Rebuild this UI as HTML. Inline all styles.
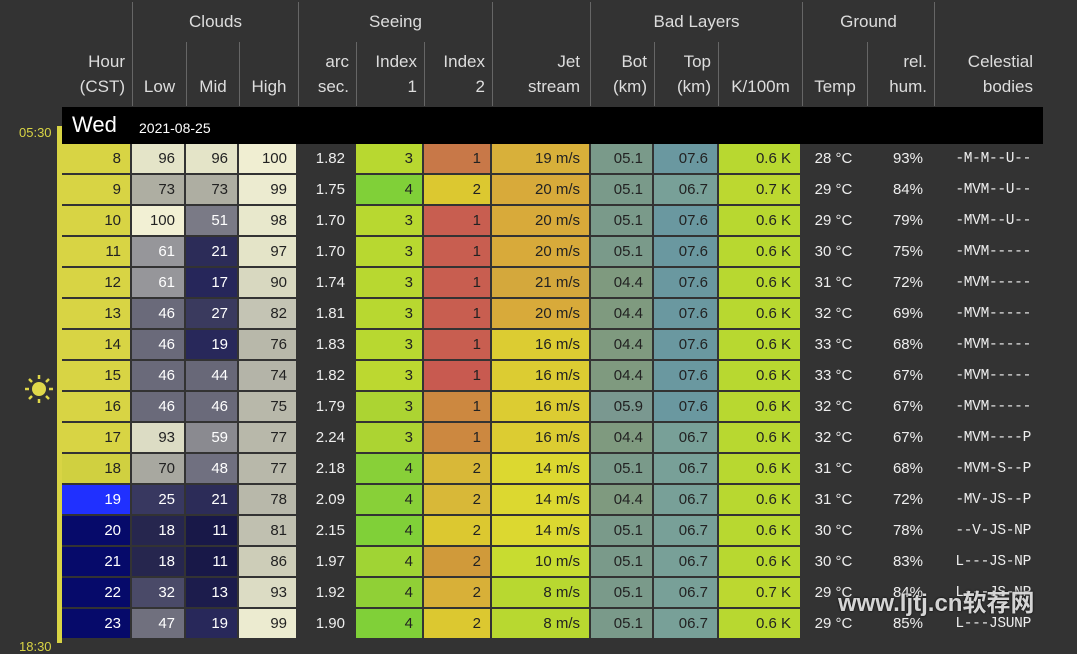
<!DOCTYPE html>
<html><head><meta charset="utf-8"><style>
*{margin:0;padding:0;box-sizing:border-box}
body{width:1077px;height:643px;background:#333;overflow:hidden;position:relative;font-family:"Liberation Sans","DejaVu Sans",sans-serif;color:#eee}
.h{position:absolute;font-size:17px;color:#ddd;line-height:25px}
.vl{position:absolute;width:1px;background:#666}
table{position:absolute;left:62px;top:144px;border-collapse:separate;border-spacing:0;table-layout:fixed;width:981px}
td{height:31px;border-right:2px solid #333;border-bottom:2px solid #333;text-align:right;padding-right:9px;font-size:15px;color:#222;white-space:nowrap}
td.d{background:#333;color:#eee}
td.w{color:#fff}
td.c{text-align:center;padding:0 0 0 0}
td.m{font-family:"Liberation Mono",monospace;font-size:14.5px;padding-right:10px;color:#eee;letter-spacing:-0.3px}
</style></head><body>
<div class="vl" style="left:132px;top:2px;height:104px"></div>
<div class="vl" style="left:186px;top:42px;height:64px"></div>
<div class="vl" style="left:239px;top:42px;height:64px"></div>
<div class="vl" style="left:298px;top:2px;height:104px"></div>
<div class="vl" style="left:356px;top:42px;height:64px"></div>
<div class="vl" style="left:424px;top:42px;height:64px"></div>
<div class="vl" style="left:492px;top:2px;height:104px"></div>
<div class="vl" style="left:590px;top:2px;height:104px"></div>
<div class="vl" style="left:654px;top:42px;height:64px"></div>
<div class="vl" style="left:718px;top:42px;height:64px"></div>
<div class="vl" style="left:802px;top:2px;height:104px"></div>
<div class="vl" style="left:867px;top:42px;height:64px"></div>
<div class="vl" style="left:934px;top:2px;height:104px"></div>

<div class="h" style="left:133px;width:165px;top:9px;text-align:center">Clouds</div>
<div class="h" style="left:299px;width:193px;top:9px;text-align:center">Seeing</div>
<div class="h" style="left:591px;width:211px;top:9px;text-align:center">Bad Layers</div>
<div class="h" style="left:803px;width:131px;top:9px;text-align:center">Ground</div>

<div class="h" style="left:62px;width:63px;top:49px;text-align:right">Hour<br>(CST)</div>
<div class="h" style="left:133px;width:53px;top:74px;text-align:center">Low</div>
<div class="h" style="left:187px;width:52px;top:74px;text-align:center">Mid</div>
<div class="h" style="left:240px;width:58px;top:74px;text-align:center">High</div>
<div class="h" style="left:299px;width:50px;top:49px;text-align:right">arc<br>sec.</div>
<div class="h" style="left:357px;width:60px;top:49px;text-align:right">Index<br>1</div>
<div class="h" style="left:425px;width:60px;top:49px;text-align:right">Index<br>2</div>
<div class="h" style="left:493px;width:87px;top:49px;text-align:right">Jet<br>stream</div>
<div class="h" style="left:591px;width:56px;top:49px;text-align:right">Bot<br>(km)</div>
<div class="h" style="left:655px;width:56px;top:49px;text-align:right">Top<br>(km)</div>
<div class="h" style="left:719px;width:83px;top:74px;text-align:center">K/100m</div>
<div class="h" style="left:803px;width:64px;top:74px;text-align:center">Temp</div>
<div class="h" style="left:868px;width:59px;top:49px;text-align:right">rel.<br>hum.</div>
<div class="h" style="left:935px;width:98px;top:49px;text-align:right">Celestial<br>bodies</div>

<div style="position:absolute;left:62px;top:107px;width:981px;height:37px;background:#000"></div>
<div style="position:absolute;left:72px;top:112px;font-size:22px;color:#fff">Wed</div>
<div style="position:absolute;left:139px;top:120px;font-size:14px;color:#fff">2021-08-25</div>
<div style="position:absolute;left:57px;top:126px;width:5px;height:517px;background:#d8d444"></div>
<div style="position:absolute;left:19px;top:125px;font-size:13px;color:#d8d444">05:30</div>
<div style="position:absolute;left:19px;top:639px;font-size:13px;color:#d8d444">18:30</div>
<svg style="position:absolute;left:24px;top:374px" width="30" height="30" viewBox="0 0 30 30"><circle cx="15" cy="15" r="7" fill="#e0d84a"/><g stroke="#e0d84a" stroke-width="2.5"><line x1="15" y1="1" x2="15" y2="5"/><line x1="15" y1="25" x2="15" y2="29"/><line x1="1" y1="15" x2="5" y2="15"/><line x1="25" y1="15" x2="29" y2="15"/><line x1="5" y1="5" x2="8" y2="8"/><line x1="22" y1="22" x2="25" y2="25"/><line x1="25" y1="5" x2="22" y2="8"/><line x1="5" y1="25" x2="8" y2="22"/></g></svg>

<table>
<colgroup><col style="width:70px"><col style="width:54px"><col style="width:53px"><col style="width:59px"><col style="width:58px"><col style="width:68px"><col style="width:68px"><col style="width:99px"><col style="width:63px"><col style="width:65px"><col style="width:83px"><col style="width:65px"><col style="width:67px"><col style="width:109px"></colgroup>
<tr><td style="background:#d8d444">8</td><td style="background:#e4e4c8">96</td><td style="background:#e4e4c8">96</td><td style="background:#f0eed2">100</td><td class="d">1.82</td><td style="background:#b8d830">3</td><td style="background:#c87848">1</td><td style="background:#d8b03a">19 m/s</td><td style="background:#7a9a8a">05.1</td><td style="background:#6a98a0">07.6</td><td style="background:#b8d830">0.6 K</td><td class="d c">28 °C</td><td class="d">93%</td><td class="m">-M-M--U--</td></tr>
<tr><td style="background:#d8d444">9</td><td style="background:#aeaea2">73</td><td style="background:#aeaea2">73</td><td style="background:#ecebd0">99</td><td class="d">1.75</td><td style="background:#80d038">4</td><td style="background:#dcc830">2</td><td style="background:#d8aa3a">20 m/s</td><td style="background:#7a9a8a">05.1</td><td style="background:#78a098">06.7</td><td style="background:#bcd830">0.7 K</td><td class="d c">29 °C</td><td class="d">84%</td><td class="m">-MVM--U--</td></tr>
<tr><td style="background:#d8d444">10</td><td style="background:#f2f0d4">100</td><td class="w" style="background:#7a7a86">51</td><td style="background:#e8e8cc">98</td><td class="d">1.70</td><td style="background:#b8d830">3</td><td style="background:#c85e50">1</td><td style="background:#d8aa3a">20 m/s</td><td style="background:#7a9a8a">05.1</td><td style="background:#6a98a0">07.6</td><td style="background:#b8d830">0.6 K</td><td class="d c">29 °C</td><td class="d">79%</td><td class="m">-MVM--U--</td></tr>
<tr><td style="background:#d8d444">11</td><td class="w" style="background:#96969a">61</td><td class="w" style="background:#2c2c58">21</td><td style="background:#e4e4c8">97</td><td class="d">1.70</td><td style="background:#b8d830">3</td><td style="background:#c85e50">1</td><td style="background:#d8aa3a">20 m/s</td><td style="background:#7a9a8a">05.1</td><td style="background:#6a98a0">07.6</td><td style="background:#b8d830">0.6 K</td><td class="d c">30 °C</td><td class="d">75%</td><td class="m">-MVM-----</td></tr>
<tr><td style="background:#d8d444">12</td><td class="w" style="background:#96969a">61</td><td class="w" style="background:#26265a">17</td><td style="background:#d8d8c0">90</td><td class="d">1.74</td><td style="background:#b8d830">3</td><td style="background:#c85e50">1</td><td style="background:#d4a83c">21 m/s</td><td style="background:#7f9a7f">04.4</td><td style="background:#6a98a0">07.6</td><td style="background:#b8d830">0.6 K</td><td class="d c">31 °C</td><td class="d">72%</td><td class="m">-MVM-----</td></tr>
<tr><td style="background:#d8d444">13</td><td class="w" style="background:#6a6a7a">46</td><td class="w" style="background:#3a3a5e">27</td><td style="background:#c4c4b4">82</td><td class="d">1.81</td><td style="background:#b8d830">3</td><td style="background:#c85e50">1</td><td style="background:#d8aa3a">20 m/s</td><td style="background:#7f9a7f">04.4</td><td style="background:#6a98a0">07.6</td><td style="background:#b8d830">0.6 K</td><td class="d c">32 °C</td><td class="d">69%</td><td class="m">-MVM-----</td></tr>
<tr><td style="background:#d8d444">14</td><td class="w" style="background:#6a6a7a">46</td><td class="w" style="background:#28285a">19</td><td style="background:#b8b8aa">76</td><td class="d">1.83</td><td style="background:#b8d830">3</td><td style="background:#c85e50">1</td><td style="background:#dccc32">16 m/s</td><td style="background:#7f9a7f">04.4</td><td style="background:#6a98a0">07.6</td><td style="background:#b8d830">0.6 K</td><td class="d c">33 °C</td><td class="d">68%</td><td class="m">-MVM-----</td></tr>
<tr><td style="background:#d8d444">15</td><td class="w" style="background:#6a6a7a">46</td><td class="w" style="background:#686878">44</td><td style="background:#b4b4a8">74</td><td class="d">1.82</td><td style="background:#bcd830">3</td><td style="background:#c85a50">1</td><td style="background:#dccc32">16 m/s</td><td style="background:#7f9a7f">04.4</td><td style="background:#6a98a0">07.6</td><td style="background:#b8d830">0.6 K</td><td class="d c">33 °C</td><td class="d">67%</td><td class="m">-MVM-----</td></tr>
<tr><td style="background:#d8d444">16</td><td class="w" style="background:#6a6a7a">46</td><td class="w" style="background:#6a6a7a">46</td><td style="background:#b8b8aa">75</td><td class="d">1.79</td><td style="background:#acd432">3</td><td style="background:#cc8840">1</td><td style="background:#dccc32">16 m/s</td><td style="background:#7a9890">05.9</td><td style="background:#6a98a0">07.6</td><td style="background:#b8d830">0.6 K</td><td class="d c">32 °C</td><td class="d">67%</td><td class="m">-MVM-----</td></tr>
<tr><td style="background:#d8d444">17</td><td style="background:#dcdcc4">93</td><td class="w" style="background:#8a8a90">59</td><td style="background:#b8b8aa">77</td><td class="d">2.24</td><td style="background:#acd432">3</td><td style="background:#cc8840">1</td><td style="background:#dccc32">16 m/s</td><td style="background:#7f9a7f">04.4</td><td style="background:#78a098">06.7</td><td style="background:#b8d830">0.6 K</td><td class="d c">32 °C</td><td class="d">67%</td><td class="m">-MVM----P</td></tr>
<tr><td style="background:#d0d040">18</td><td style="background:#a8a8a0">70</td><td class="w" style="background:#707080">48</td><td style="background:#b8b8aa">77</td><td class="d">2.18</td><td style="background:#88d038">4</td><td style="background:#d8b838">2</td><td style="background:#dcd830">14 m/s</td><td style="background:#7a9a8a">05.1</td><td style="background:#78a098">06.7</td><td style="background:#b8d830">0.6 K</td><td class="d c">31 °C</td><td class="d">68%</td><td class="m">-MVM-S--P</td></tr>
<tr><td class="w" style="background:#2030ff">19</td><td class="w" style="background:#383860">25</td><td class="w" style="background:#2c2c58">21</td><td style="background:#b8b8aa">78</td><td class="d">2.09</td><td style="background:#88d038">4</td><td style="background:#d8b838">2</td><td style="background:#dcd830">14 m/s</td><td style="background:#7f9a7f">04.4</td><td style="background:#78a098">06.7</td><td style="background:#b8d830">0.6 K</td><td class="d c">31 °C</td><td class="d">72%</td><td class="m">-MV-JS--P</td></tr>
<tr><td class="w" style="background:#060a6a">20</td><td class="w" style="background:#26264e">18</td><td class="w" style="background:#181848">11</td><td style="background:#c0c0b0">81</td><td class="d">2.15</td><td style="background:#80d038">4</td><td style="background:#dcc830">2</td><td style="background:#dcd830">14 m/s</td><td style="background:#7a9a8a">05.1</td><td style="background:#78a098">06.7</td><td style="background:#b8d830">0.6 K</td><td class="d c">30 °C</td><td class="d">78%</td><td class="m">--V-JS-NP</td></tr>
<tr><td class="w" style="background:#060a6a">21</td><td class="w" style="background:#26264e">18</td><td class="w" style="background:#181848">11</td><td style="background:#cdcdb8">86</td><td class="d">1.97</td><td style="background:#a0d434">4</td><td style="background:#d09a3a">2</td><td style="background:#c8dc30">10 m/s</td><td style="background:#7a9a8a">05.1</td><td style="background:#78a098">06.7</td><td style="background:#b8d830">0.6 K</td><td class="d c">30 °C</td><td class="d">83%</td><td class="m">L---JS-NP</td></tr>
<tr><td class="w" style="background:#060a6a">22</td><td class="w" style="background:#4a4a68">32</td><td class="w" style="background:#1c1c4c">13</td><td style="background:#dcdcc4">93</td><td class="d">1.92</td><td style="background:#90d036">4</td><td style="background:#d8b038">2</td><td style="background:#b8d830">8 m/s</td><td style="background:#7a9a8a">05.1</td><td style="background:#78a098">06.7</td><td style="background:#bcd830">0.7 K</td><td class="d c">29 °C</td><td class="d">84%</td><td class="m">L---JS-NP</td></tr>
<tr><td class="w" style="background:#060a6a">23</td><td class="w" style="background:#70707e">47</td><td class="w" style="background:#28285a">19</td><td style="background:#ecebd0">99</td><td class="d">1.90</td><td style="background:#80d038">4</td><td style="background:#dcc830">2</td><td style="background:#b8d830">8 m/s</td><td style="background:#7a9a8a">05.1</td><td style="background:#78a098">06.7</td><td style="background:#b8d830">0.6 K</td><td class="d c">29 °C</td><td class="d">85%</td><td class="m">L---JSUNP</td></tr>
</table>
<div style="position:absolute;left:838px;top:583px;font-size:24px;font-weight:bold;color:rgba(235,235,235,0.9);text-shadow:0 0 2px #000;font-family:'Liberation Sans','Noto Sans CJK SC',sans-serif">www.ljtj.cn软荐网</div>
</body></html>
